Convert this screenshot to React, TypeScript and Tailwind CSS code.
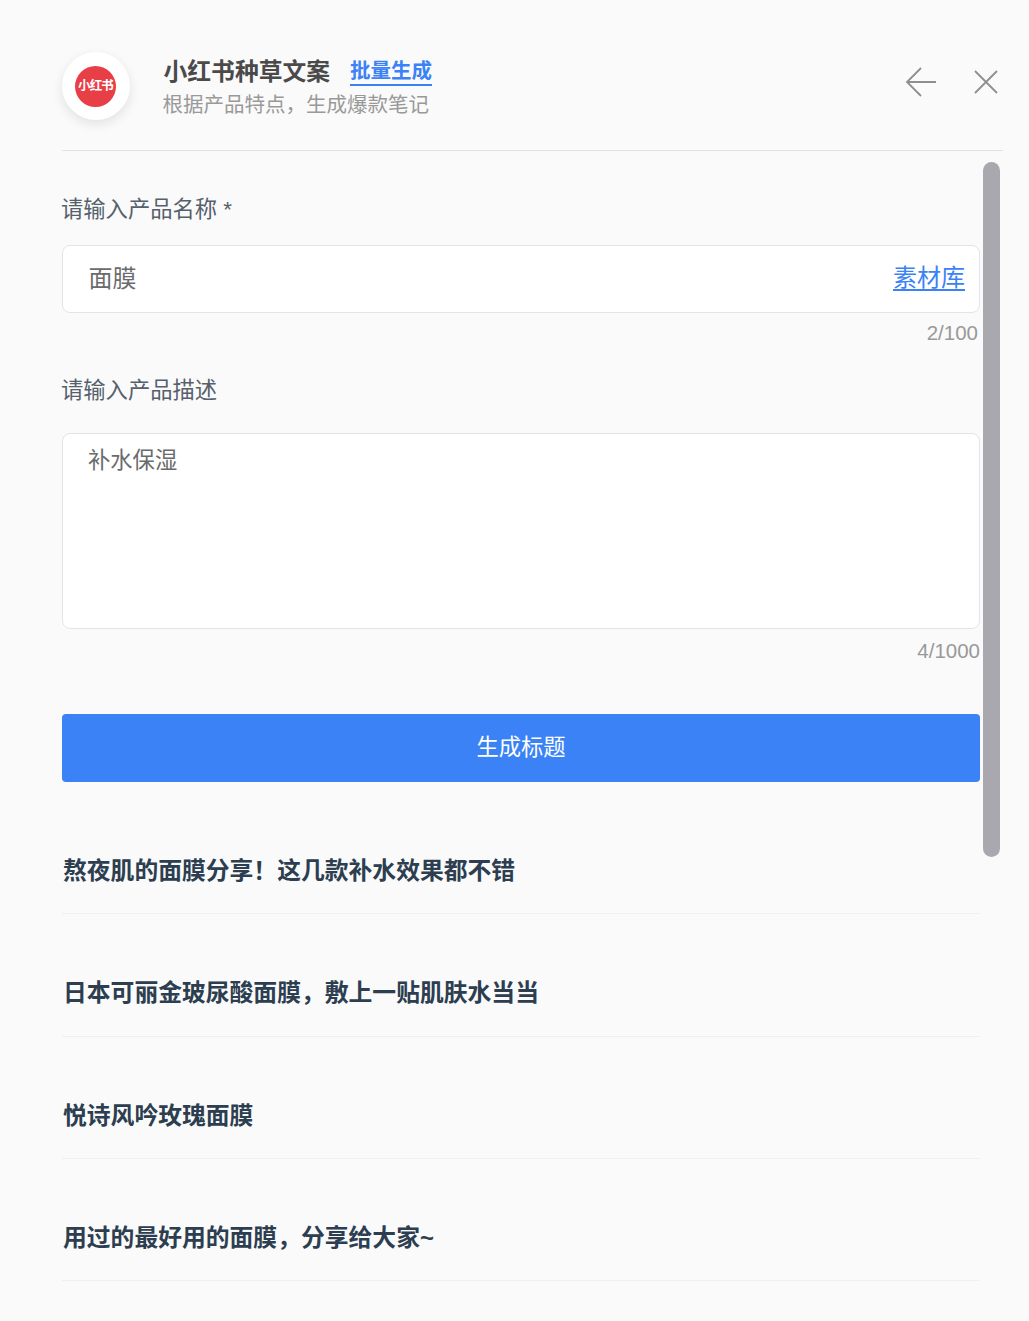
import React from 'react';

const titles = [
  '熬夜肌的面膜分享！这几款补水效果都不错',
  '日本可丽金玻尿酸面膜，敷上一贴肌肤水当当',
  '悦诗风吟玫瑰面膜',
  '用过的最好用的面膜，分享给大家~',
];

const font = "font-['Liberation_Sans','Noto_Sans_CJK_SC',sans-serif]";

export default function App() {
  return (
    <div className={`${font} relative h-[1321px] overflow-hidden bg-[#fafafa] pl-[62px] pr-[26px]`}>
      {/* Header */}
      <div className="flex h-[151px] items-start border-b border-[#e2e2e2] pt-[52px]">
        <div className="flex h-[68px] w-[68px] shrink-0 items-center justify-center rounded-full bg-white shadow-[0_4px_12px_rgba(0,0,0,0.1)]">
          <div className="mr-[1px] flex h-[41px] w-[41px] items-center justify-center rounded-full bg-[#e83e46] text-[12.5px] font-bold tracking-[-0.8px] text-white">
            小红书
          </div>
        </div>
        <div className="ml-[33.5px] flex-1 pt-[1px]">
          <div className="flex h-[38px] items-center">
            <span className="text-[23.8px] font-bold leading-[38px] text-[#4a4a4a]">小红书种草文案</span>
            <span className="ml-[20px] border-b-2 border-[#3b82f6] text-[20.5px] font-bold leading-[26px] text-[#3b82f6]">批量生成</span>
          </div>
          <div className="-ml-[1px] text-[20.5px] leading-[28px] text-[#999999]">根据产品特点，生成爆款笔记</div>
        </div>
        <div className="mt-[14px] flex items-center gap-[36px] pr-[4px]">
          <svg width="32" height="32" viewBox="0 0 32 32" fill="none" stroke="#8f8f8f" strokeWidth="1.8">
            <path d="M31 16H2M16 2 2 16l14 14" />
          </svg>
          <svg width="26" height="26" viewBox="0 0 26 26" fill="none" stroke="#8f8f8f" strokeWidth="1.8">
            <path d="M2 2l22 22M24 2 2 24" />
          </svg>
        </div>
      </div>

      {/* Scrollbar */}
      <div className="absolute left-[983px] top-[162px] h-[695px] w-[17px] rounded-full bg-[#a8a8ae]" />

      {/* Form */}
      <div className="w-[918px]">
        <div className="mt-[41px] -ml-[1px] text-[22.3px] leading-[35px] text-[#55606c]">请输入产品名称 *</div>
        <div className="mt-[18px] flex h-[68px] items-center justify-between rounded-lg border border-[#e2e4e8] bg-white pl-[25.5px] pr-[14px]">
          <span className="text-[24px] text-[#6b6b6b]">面膜</span>
          <span className="pb-[3px] text-[24px] text-[#3b82f6] underline decoration-2 underline-offset-[3px]">素材库</span>
        </div>
        <div className="mt-[8px] pr-[2px] text-right text-[20.5px] leading-[24px] text-[#999999]">2/100</div>

        <div className="mt-[28px] -ml-[1px] text-[22.3px] leading-[35px] text-[#55606c]">请输入产品描述</div>
        <div className="mt-[25px] h-[196px] rounded-lg border border-[#e2e4e8] bg-white pl-[25px] pt-[9px] text-[22.3px] leading-[35px] text-[#6b6b6b]">
          补水保湿
        </div>
        <div className="mt-[10px] text-right text-[20.5px] leading-[24px] text-[#999999]">4/1000</div>

        <button className="mt-[51px] flex h-[68px] w-full items-center justify-center rounded bg-[#3b82f6] text-[22.3px] text-white">
          生成标题
        </button>

        <div className="mt-[10px]">
          {titles.map((t) => (
            <div key={t} className="h-[122.33px] border-b border-[#f0f0f0] pl-[1px] pt-[61px] text-[23.8px] font-bold leading-[36px] text-[#2c3e50]">
              {t}
            </div>
          ))}
        </div>
      </div>
    </div>
  );
}
